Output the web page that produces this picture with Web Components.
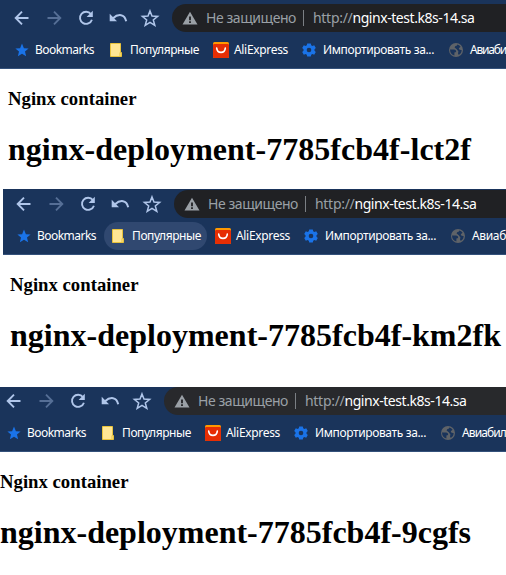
<!DOCTYPE html>
<html lang="ru">
<head>
<meta charset="utf-8">
<title>Nginx container</title>
<style>
body { margin: 0; background: #fff; width: 506px; height: 575px; overflow: hidden; }
</style>
</head>
<body>
<browser-shots></browser-shots>
<script>
// A single line of text spread to an exact advance width.
class FitText extends HTMLElement {
  connectedCallback() {
    const root = this.attachShadow({ mode: 'open' });
    root.innerHTML = `<style>
      :host { display: block; flex: none; white-space: pre; }
      span { display: inline-block; }
    </style><span></span>`;
    const span = root.querySelector('span');
    span.textContent = this.getAttribute('text');
    const w = +this.getAttribute('w');
    this.style.width = w + 'px';
    const n = span.textContent.length;
    span.style.letterSpacing = (w - span.getBoundingClientRect().width) / n + 'px';
  }
}
customElements.define('fit-text', FitText);

const ICONS = {
  back: '<path d="M14.5 8H2M8 1.7 1.7 8 8 14.3" fill="none" stroke="#b0c6ea" stroke-width="1.9"/>',
  forward: '<path d="M1.5 8H14M8 1.7 14.3 8 8 14.3" fill="none" stroke="#566f96" stroke-width="1.9"/>',
  reload: '<path d="M12.9 4A6.1 6.1 0 1 0 13.9 9.7" fill="none" stroke="#b0c6ea" stroke-width="1.9"/><path d="M14.8.8V7H8.6Z" fill="#b0c6ea"/>',
  undo: '<path d="M3 8.3Q7 4.6 11 5.2T16.2 11.3" fill="none" stroke="#b0c6ea" stroke-width="2"/><path d="M-.3 3.8V11.2H7Z" fill="#b0c6ea"/>',
  outline: '<path d="M8 .9 10 6.1 15.6 6.4 11.3 9.9 12.8 15.4 8 12.3 3.2 15.4 4.7 9.9.4 6.4 6 6.1Z" fill="none" stroke="#b0c6ea" stroke-width="1.5"/>',
  warning: '<path d="M8 1.7 15.5 14.5H.5Z" fill="#9aa0a6"/><path d="M7.1 6.5h1.8v3.7H7.1zM7.1 11.3h1.8v1.7H7.1z" fill="#202124"/>',
  star: '<path d="M8 1.6 9.9 6.2 14.6 6.5 11 9.6 12.1 14.3 8 11.7 3.9 14.3 5 9.6 1.4 6.5 6.1 6.2Z" fill="#1a73e8"/>',
  folder: '<path d="M2.5 1.5H12.5V10.5H13.5V14.5H2.5Z" fill="#ffe694" stroke="#e9c33c"/><path d="M12 10.5V14" stroke="#e9c33c"/>',
  ali: '<rect width="16" height="16" rx="1.5" fill="#ff9800"/><path d="M0 3.3Q0 2 1.3 2H14.7Q16 2 16 3.3V14.5Q16 16 14.5 16H1.5Q0 16 0 14.5Z" fill="#e62e04"/><path d="M3.7 6.1C4.2 11.8 11.8 11.8 12.3 6.1" fill="none" stroke="#fff" stroke-width="1.6" stroke-linecap="round"/>',
  gear: '<path d="M6.2 1.4h3.6l.4 1.8 1.2.7 1.8-.6 1.6 2.8-1.3 1.2v1.4l1.3 1.2-1.6 2.8-1.8-.6-1.2.7-.4 1.8H6.2l-.4-1.8-1.2-.7-1.8.6-1.6-2.8 1.3-1.2V7.3L1.2 6.1l1.6-2.8 1.8.6 1.2-.7Z" fill="#1a73e8"/><circle cx="8" cy="8" r="2.3" fill="#1a345b"/>',
  globe: '<circle cx="8" cy="8" r="7" fill="#5f6368"/><path d="M2 7.6 6.3 7.6Q8.4 8 8.2 9.9L6.4 10.4V13.6Q2.2 12.5 2 7.6ZM6.6 5.6 7.2 4.2 9 3.6 9.2 2.6Q11.4 3 12.6 4.8L10.8 6.2 11.2 7.6 13.8 8.2Q13.6 11.6 10.8 13L10 11.6 10.4 9.4 8.8 7.2Z" fill="#1a345b"/>'
};

class UiIcon extends HTMLElement {
  connectedCallback() {
    this.attachShadow({ mode: 'open' }).innerHTML = `<style>
      :host { display: block; flex: none; width: 16px; height: 16px; }
      svg { display: block; overflow: visible; }
    </style><svg width="16" height="16" viewBox="0 0 16 16">${ICONS[this.getAttribute('name')]}</svg>`;
  }
}
customElements.define('ui-icon', UiIcon);

class AddressBar extends HTMLElement {
  connectedCallback() {
    this.attachShadow({ mode: 'open' }).innerHTML = `<style>
      :host { display: flex; align-items: center; flex: none; box-sizing: border-box; width: 420px; height: 28px;
        margin-left: 6px; padding-left: 10px; border-radius: 14px; background: var(--field, #202124);
        color: #9aa0a6; font: 14px/20px "Noto Sans", "Open Sans", sans-serif; }
      .state { margin-left: 8px; }
      i { width: 1px; height: 16px; margin: 0 9px 0 7px; background: #7b7f84; }
      .host { color: #fff; }
    </style>
    <ui-icon name="warning"></ui-icon>
    <fit-text class="state" text="Не защищено" w="90"></fit-text><i></i>
    <fit-text text="http://" w="39.5"></fit-text>
    <fit-text class="host" text="nginx-test.k8s-14.sa" w="122"></fit-text>`;
  }
}
customElements.define('address-bar', AddressBar);

class BookmarkItem extends HTMLElement {
  connectedCallback() {
    this.attachShadow({ mode: 'open' }).innerHTML = `<style>
      :host { display: flex; align-items: center; flex: none; box-sizing: border-box; height: 28px; gap: 6px;
        padding: 0 8px 0 6px; border-radius: 14px; color: #fff; font: 12px/18px "Noto Sans", "Open Sans", sans-serif; }
      :host([hovered]) { background: #304870; }
    </style>
    <ui-icon name="${this.getAttribute('icon')}"></ui-icon>
    <fit-text text="${this.getAttribute('label')}" w="${this.getAttribute('w')}"></fit-text>`;
  }
}
customElements.define('bookmark-item', BookmarkItem);

class BrowserChrome extends HTMLElement {
  connectedCallback() {
    const hover = this.hasAttribute('hover') ? 'hovered' : '';
    this.attachShadow({ mode: 'open' }).innerHTML = `<style>
      :host { display: block; box-sizing: border-box; overflow: hidden; background: #1a345b;
        border-bottom: 1px solid #34517b; }
      nav, div { display: flex; width: 600px; align-items: center; margin-left: var(--shift, 0px); }
      nav { padding: var(--lead, 4px) 0 0 6px; height: 28px; }
      .btn { width: 32px; display: grid; place-items: center; flex: none; }
      div { height: 28px; padding: 4px 0 0 8px; }
      .star { gap: 5px; }
      .folder { padding-right: 6px; }
      .ali { gap: 5px; margin: 0 -1px 0 2px; }
      .gear { margin-right: 0; }
    </style>
    <nav>${['back', 'forward', 'reload', 'undo', 'outline'].map(n => `<span class="btn"><ui-icon name="${n}"></ui-icon></span>`).join('')}<address-bar></address-bar></nav>
    <div>
      <bookmark-item class="star" icon="star" label="Bookmarks" w="59"></bookmark-item>
      <bookmark-item class="folder" icon="folder" label="Популярные" w="69" ${hover}></bookmark-item>
      <bookmark-item class="ali" icon="ali" label="AliExpress" w="54"></bookmark-item>
      <bookmark-item class="gear" icon="gear" label="Импортировать за..." w="111"></bookmark-item>
      <bookmark-item icon="globe" label="${this.getAttribute('last')}" w="${this.getAttribute('last-w')}"></bookmark-item>
    </div>`;
  }
}
customElements.define('browser-chrome', BrowserChrome);

class PodPage extends HTMLElement {
  connectedCallback() {
    this.attachShadow({ mode: 'open' }).innerHTML = `<style>
      :host { display: block; color: #000; font-family: "Liberation Serif", "Times New Roman", serif; }
      h3, h1 { margin: 0; font-weight: bold; }
      h3 { font-size: 18.72px; line-height: 22px; }
      h1 { font-size: 32px; line-height: 36px; margin-top: 21px; }
    </style>
    <h3><fit-text text="Nginx container" w="128.5"></fit-text></h3>
    <h1><fit-text text="${this.getAttribute('pod')}" w="${this.getAttribute('w')}"></fit-text></h1>`;
  }
}
customElements.define('pod-page', PodPage);

class BrowserShots extends HTMLElement {
  connectedCallback() {
    this.attachShadow({ mode: 'open' }).innerHTML = `<style>
      :host { display: grid; grid-template-rows: 189px 198px 188px; width: 506px; overflow: hidden; }
      section { overflow: hidden; }
      .a browser-chrome { height: 69px; }
      .a pod-page { padding: 19px 0 0 8px; }
      .b browser-chrome { height: 66px; margin-left: 3px; --shift: -1px; --lead: 1px; }
      .b pod-page { padding: 19px 0 0 10px; }
      .c browser-chrome { height: 65px; --shift: -8px; --lead: 0px; --field: #28292c; }
      .c pod-page { padding: 19px 0 0 0; }
    </style>
    <section class="a"><browser-chrome last="Авиаби" last-w="36"></browser-chrome><pod-page pod="nginx-deployment-7785fcb4f-lct2f" w="463"></pod-page></section>
    <section class="b"><browser-chrome hover last="Авиаб" last-w="34"></browser-chrome><pod-page pod="nginx-deployment-7785fcb4f-km2fk" w="491"></pod-page></section>
    <section class="c"><browser-chrome last="Авиабил" last-w="44"></browser-chrome><pod-page pod="nginx-deployment-7785fcb4f-9cgfs" w="471"></pod-page></section>`;
  }
}
customElements.define('browser-shots', BrowserShots);
</script>
</body>
</html>
